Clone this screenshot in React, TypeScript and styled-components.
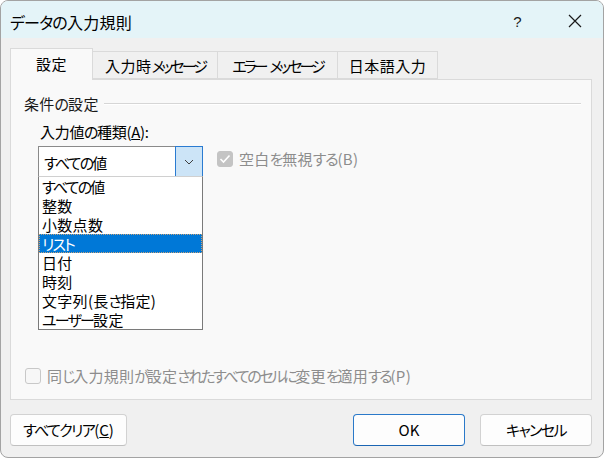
import React from "react";
import styled, { createGlobalStyle } from "styled-components";

const GlobalStyle = createGlobalStyle`
  html, body { margin: 0; padding: 0; background: #ffffff; }
  * { box-sizing: border-box; }
  body {
    font-family: "Noto Sans CJK JP", "Noto Sans", sans-serif;
    font-feature-settings: "palt";
    -webkit-font-smoothing: antialiased;
  }
`;

const Kana = styled.span`
  letter-spacing: var(--kana, -2px);
`;

const KANA_RUN = /([\u3041-\u30ff]+)/;

function JP({ text }: { text: string }) {
  const parts = text.split(KANA_RUN);
  return (
    <span>
      {parts.map((p, i) =>
        KANA_RUN.test(p) ? <Kana key={i}>{p}</Kana> : <React.Fragment key={i}>{p}</React.Fragment>
      )}
    </span>
  );
}

const Window = styled.div`
  width: 604px;
  height: 458px;
  border: 1px solid #a3a3a3;
  border-radius: 8px;
  overflow: hidden;
  display: flex;
  flex-direction: column;
  background: #f0f0f0;
`;

const TitleBar = styled.div`
  height: 37px;
  flex: none;
  display: flex;
  align-items: center;
  background: #e4f4f8;
  padding-left: 9px;
`;

const Title = styled.div`
  flex: 1;
  font-size: 16px;
  color: #000;
  padding-top: 4px;
  letter-spacing: 0.3px;
  --kana: -0.8px;
`;

const CaptionButton = styled.div`
  width: 57px;
  height: 37px;
  display: flex;
  align-items: center;
  justify-content: center;
  color: #1a1a1a;
  font-family: "Liberation Sans", sans-serif;
  font-size: 15px;
  padding-top: 3px;
`;

const Body = styled.div`
  flex: 1;
  display: flex;
  flex-direction: column;
  padding: 10px 11px 0 9px;
`;

const TabRow = styled.div`
  display: flex;
  align-items: flex-end;
  height: 31px;
  position: relative;
  z-index: 1;
`;

const Tab = styled.div<{ $active?: boolean; $w: number }>`
  width: ${(p) => p.$w}px;
  height: ${(p) => (p.$active ? 32 : 28)}px;
  margin-bottom: ${(p) => (p.$active ? -1 : 0)}px;
  display: flex;
  align-items: center;
  justify-content: center;
  padding-top: ${(p) => (p.$active ? 0 : 1)}px;
  padding-bottom: ${(p) => (p.$active ? 3 : 0)}px;
  font-size: 15px;
  letter-spacing: 0.5px;
  --kana: -3px;
  color: #000;
  background: ${(p) => (p.$active ? "#f9f9f9" : "#f0f0f0")};
  border: 1px solid #dadada;
  border-bottom: ${(p) => (p.$active ? "none" : "1px solid #dadada")};
  border-left: ${(p) => (p.$active ? "1px solid #dadada" : "none")};
`;

const Panel = styled.div`
  height: 321px;
  border: 1px solid #dadada;
  background: #f9f9f9;
  position: relative;
  display: flex;
  flex-direction: column;
  padding: 13px 10px 13px 13px;
`;

const GroupHeader = styled.div`
  display: flex;
  align-items: center;
  gap: 5px;
  font-size: 15px;
  color: #1a1a1a;
  height: 20px;
  letter-spacing: 0.3px;
  --kana: -1px;
`;

const GroupLine = styled.div`
  flex: 1;
  height: 2px;
  border-top: 1px solid #d6d6d6;
  border-bottom: 1px solid #ffffff;
  margin-top: 2px;
`;

const FieldLabel = styled.div`
  margin: 9px 0 0 16px;
  font-size: 15px;
  color: #000;
  height: 20px;
  line-height: 20px;
  letter-spacing: -0.3px;
  --kana: -1.5px;
`;

const FieldRow = styled.div`
  display: flex;
  align-items: flex-start;
  margin: 4px 0 0 14px;
  gap: 14px;
`;

const Combo = styled.div`
  width: 165px;
  height: 31px;
  display: flex;
  border: 1px solid #8a8a8a;
  border-bottom: none;
  background: #ffffff;
`;

const ComboText = styled.div`
  flex: 1;
  font-size: 15px;
  padding: 2px 0 0 5px;
  line-height: 28px;
  color: #000;
  --kana: -1.8px;
`;

const ComboButton = styled.div`
  width: 28px;
  height: 31px;
  margin: -1px -1px 0 0;
  background: #cce4f7;
  border: 1px solid #2a7bd1;
  display: flex;
  align-items: center;
  justify-content: center;
`;

const CheckRow = styled.label<{ $disabled?: boolean }>`
  display: flex;
  align-items: center;
  gap: 6px;
  font-size: 15px;
  letter-spacing: 0.3px;
  color: ${(p) => (p.$disabled ? "#8d8d8d" : "#000")};
`;

const CheckBox = styled.span<{ $checked?: boolean }>`
  width: 16px;
  height: 16px;
  flex: none;
  border-radius: 3px;
  display: flex;
  align-items: center;
  justify-content: center;
  background: ${(p) => (p.$checked ? "#c4c4c4" : "#f7f7f7")};
  border: 1px solid ${(p) => (p.$checked ? "#c4c4c4" : "#c8c8c8")};
`;

const IgnoreBlank = styled(CheckRow)`
  margin-top: 2px;
  --kana: -1.2px;
`;

const ApplyAll = styled(CheckRow)`
  margin-top: auto;
  margin-left: 1px;
  --kana: -2.3px;
`;

const ListBox = styled.ul`
  position: absolute;
  left: 27px;
  top: 96px;
  width: 165px;
  margin: 0;
  padding: 0;
  list-style: none;
  background: #ffffff;
  border: 1px solid #7a7a7a;
  border-top: 1px solid #d0d0d0;
  --kana: -1.8px;
`;

const ListItem = styled.li<{ $selected?: boolean }>`
  height: 19px;
  line-height: 18px;
  font-size: 15px;
  padding-left: 2px;
  letter-spacing: 0.3px;
  color: ${(p) => (p.$selected ? "#ffffff" : "#000")};
  background: ${(p) => (p.$selected ? "#0078d7" : "transparent")};
  border: 1px dotted ${(p) => (p.$selected ? "#c7a27a" : "transparent")};
`;

const Footer = styled.div`
  display: flex;
  align-items: center;
  margin-top: 14px;
  gap: 15px;
`;

const Button = styled.button<{ $primary?: boolean; $w: number }>`
  width: ${(p) => p.$w}px;
  height: 32px;
  border-radius: 4px;
  background: #fdfdfd;
  border: 1px solid ${(p) => (p.$primary ? "#2a79c9" : "#d2d2d2")};
  border-bottom-color: ${(p) => (p.$primary ? "#1b65b3" : "#c0c0c0")};
  font-family: inherit;
  font-feature-settings: "palt";
  font-size: 15px;
  color: #000;
  padding: 0 0 1px 0;
  --kana: -1.6px;
`;

const Spacer = styled.div`
  flex: 1;
`;

const items = [
  "すべての値",
  "整数",
  "小数点数",
  "リスト",
  "日付",
  "時刻",
  "文字列(長さ指定)",
  "ユーザー設定",
];

export default function App() {
  return (
    <>
      <GlobalStyle />
      <Window>
        <TitleBar>
          <Title>
            <JP text="データの入力規則" />
          </Title>
          <CaptionButton>?</CaptionButton>
          <CaptionButton>
            <svg width="14" height="14" viewBox="0 0 14 14">
              <path d="M1 1 L13 13 M13 1 L1 13" stroke="#1a1a1a" strokeWidth="1.2" fill="none" />
            </svg>
          </CaptionButton>
        </TitleBar>
        <Body>
          <TabRow>
            <Tab $active $w={83}>設定</Tab>
            <Tab $w={125}>
              <JP text="入力時メッセージ" />
            </Tab>
            <Tab $w={120}>
              <JP text="エラー メッセージ" />
            </Tab>
            <Tab $w={100}>日本語入力</Tab>
          </TabRow>
          <Panel>
            <GroupHeader>
              <JP text="条件の設定" />
              <GroupLine />
            </GroupHeader>
            <FieldLabel>
              <JP text="入力値の種類(" />
              <u>A</u>):
            </FieldLabel>
            <FieldRow>
              <Combo>
                <ComboText>
                  <JP text="すべての値" />
                </ComboText>
                <ComboButton>
                  <svg width="10" height="6" viewBox="0 0 10 6">
                    <path d="M1 1 L5 5 L9 1" stroke="#404040" strokeWidth="1" fill="none" />
                  </svg>
                </ComboButton>
              </Combo>
              <IgnoreBlank $disabled>
                <CheckBox $checked>
                  <svg width="12" height="10" viewBox="0 0 12 10">
                    <path d="M1.5 5 L4.5 8 L10.5 1.5" stroke="#ffffff" strokeWidth="1.6" fill="none" />
                  </svg>
                </CheckBox>
                <JP text="空白を無視する(B)" />
              </IgnoreBlank>
            </FieldRow>
            <ListBox>
              {items.map((t) => (
                <ListItem key={t} $selected={t === "リスト"}>
                  <JP text={t} />
                </ListItem>
              ))}
            </ListBox>
            <ApplyAll $disabled>
              <CheckBox />
              <JP text="同じ入力規則が設定されたすべてのセルに変更を適用する(P)" />
            </ApplyAll>
          </Panel>
          <Footer>
            <Button $w={117}>
              <JP text="すべてクリア(" />
              <u>C</u>)
            </Button>
            <Spacer />
            <Button $primary $w={112}>OK</Button>
            <Button $w={112}>
              <JP text="キャンセル" />
            </Button>
          </Footer>
        </Body>
      </Window>
    </>
  );
}
